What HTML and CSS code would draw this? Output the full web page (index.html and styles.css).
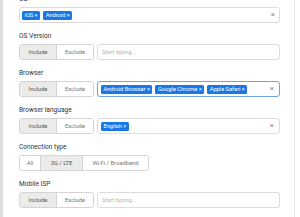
FILE: index.html
```html
<!DOCTYPE html>
<html>
<head>
<meta charset="utf-8">
<link rel="stylesheet" href="styles.css">
</head>
<body>
<div class="page">
  <div class="strip"></div>
  <div class="content">
    <div class="section first">
      <div class="label">OS</div>
      <div class="row">
        <div class="field full">
          <span class="tag">iOS ×</span>
          <span class="tag">Android ×</span>
          <span class="clear">×</span>
        </div>
      </div>
    </div>
    <div class="section">
      <div class="label">OS Version</div>
      <div class="row">
        <div class="group">
          <span class="btn active">Include</span>
          <span class="btn">Exclude</span>
        </div>
        <div class="field"><span class="ph">Start typing...</span></div>
      </div>
    </div>
    <div class="section">
      <div class="label">Browser</div>
      <div class="row">
        <div class="group">
          <span class="btn active">Include</span>
          <span class="btn">Exclude</span>
        </div>
        <div class="field focus">
          <span class="tag">Android Browser ×</span>
          <span class="tag">Google Chrome ×</span>
          <span class="tag">Apple Safari ×</span>
          <span class="clear">×</span>
        </div>
      </div>
    </div>
    <div class="section">
      <div class="label">Browser language</div>
      <div class="row">
        <div class="group">
          <span class="btn active">Include</span>
          <span class="btn">Exclude</span>
        </div>
        <div class="field">
          <span class="tag">English ×</span>
          <span class="clear">×</span>
        </div>
      </div>
    </div>
    <div class="section">
      <div class="label">Connection type</div>
      <div class="row">
        <div class="group">
          <span class="btn sm">All</span>
          <span class="btn active md">3G / LTE</span>
          <span class="btn lg">Wi-Fi / Broadband</span>
        </div>
      </div>
    </div>
    <div class="section">
      <div class="label">Mobile ISP</div>
      <div class="row">
        <div class="group">
          <span class="btn active">Include</span>
          <span class="btn">Exclude</span>
        </div>
        <div class="field"><span class="ph">Start typing...</span></div>
      </div>
    </div>
  </div>
</div>
</body>
</html>
```

FILE: styles.css
```css
html, body {
  margin: 0;
  padding: 0;
  background: #fff;
  overflow: hidden;
}
body {
  font-family: Roboto, "Liberation Sans", sans-serif;
  width: 300px;
  height: 217px;
}
.page {
  display: flex;
  width: 295px;
  height: 217px;
  border-right: 1px solid #e6e6e6;
  box-sizing: border-box;
}
.strip {
  width: 3px;
  background: #dcdcdc;
  flex: none;
}
.content {
  width: 261px;
  margin-left: 16px;
  display: flex;
  flex-direction: column;
  gap: 8px;
}
.section {
  display: flex;
  flex-direction: column;
  gap: 3px;
}
.section.first {
  margin-top: -6px;
}
.label {
  height: 10px;
  line-height: 10px;
  font-size: 6.6px;
  color: #333;
}
.row {
  display: flex;
  gap: 3px;
  height: 16px;
}
.group {
  display: flex;
  border: 1px solid #d4d4d4;
  border-radius: 3px;
  overflow: hidden;
  box-sizing: border-box;
  height: 16px;
  flex: none;
}
.btn {
  display: flex;
  align-items: center;
  justify-content: center;
  width: 36px;
  font-size: 5.8px;
  color: #777;
  background: #fff;
  border-left: 1px solid #d4d4d4;
}
.btn:first-child {
  border-left: none;
}
.btn.active {
  background: #ebebeb;
  color: #555;
}
.btn.sm { width: 20px; }
.btn.md { width: 41px; }
.btn.lg { width: 65px; }
.field {
  flex: 1;
  display: flex;
  align-items: center;
  gap: 3px;
  border: 1px solid #dcdcdc;
  border-radius: 3px;
  box-sizing: border-box;
  height: 16px;
  padding: 0 3px;
}
.field.full {
  padding: 0 2px;
}
.field.focus {
  border-color: #6fa3e6;
}
.tag {
  background: #1a78e6;
  color: #fff;
  font-size: 5.7px;
  line-height: 9px;
  height: 9px;
  padding: 0 2.5px;
  border-radius: 1.5px;
  white-space: nowrap;
}
.ph {
  font-size: 5.8px;
  color: #b5b5b5;
  padding-left: 1px;
}
.clear {
  margin-left: auto;
  margin-right: 2px;
  font-size: 8px;
  color: #888;
  line-height: 8px;
}
```
